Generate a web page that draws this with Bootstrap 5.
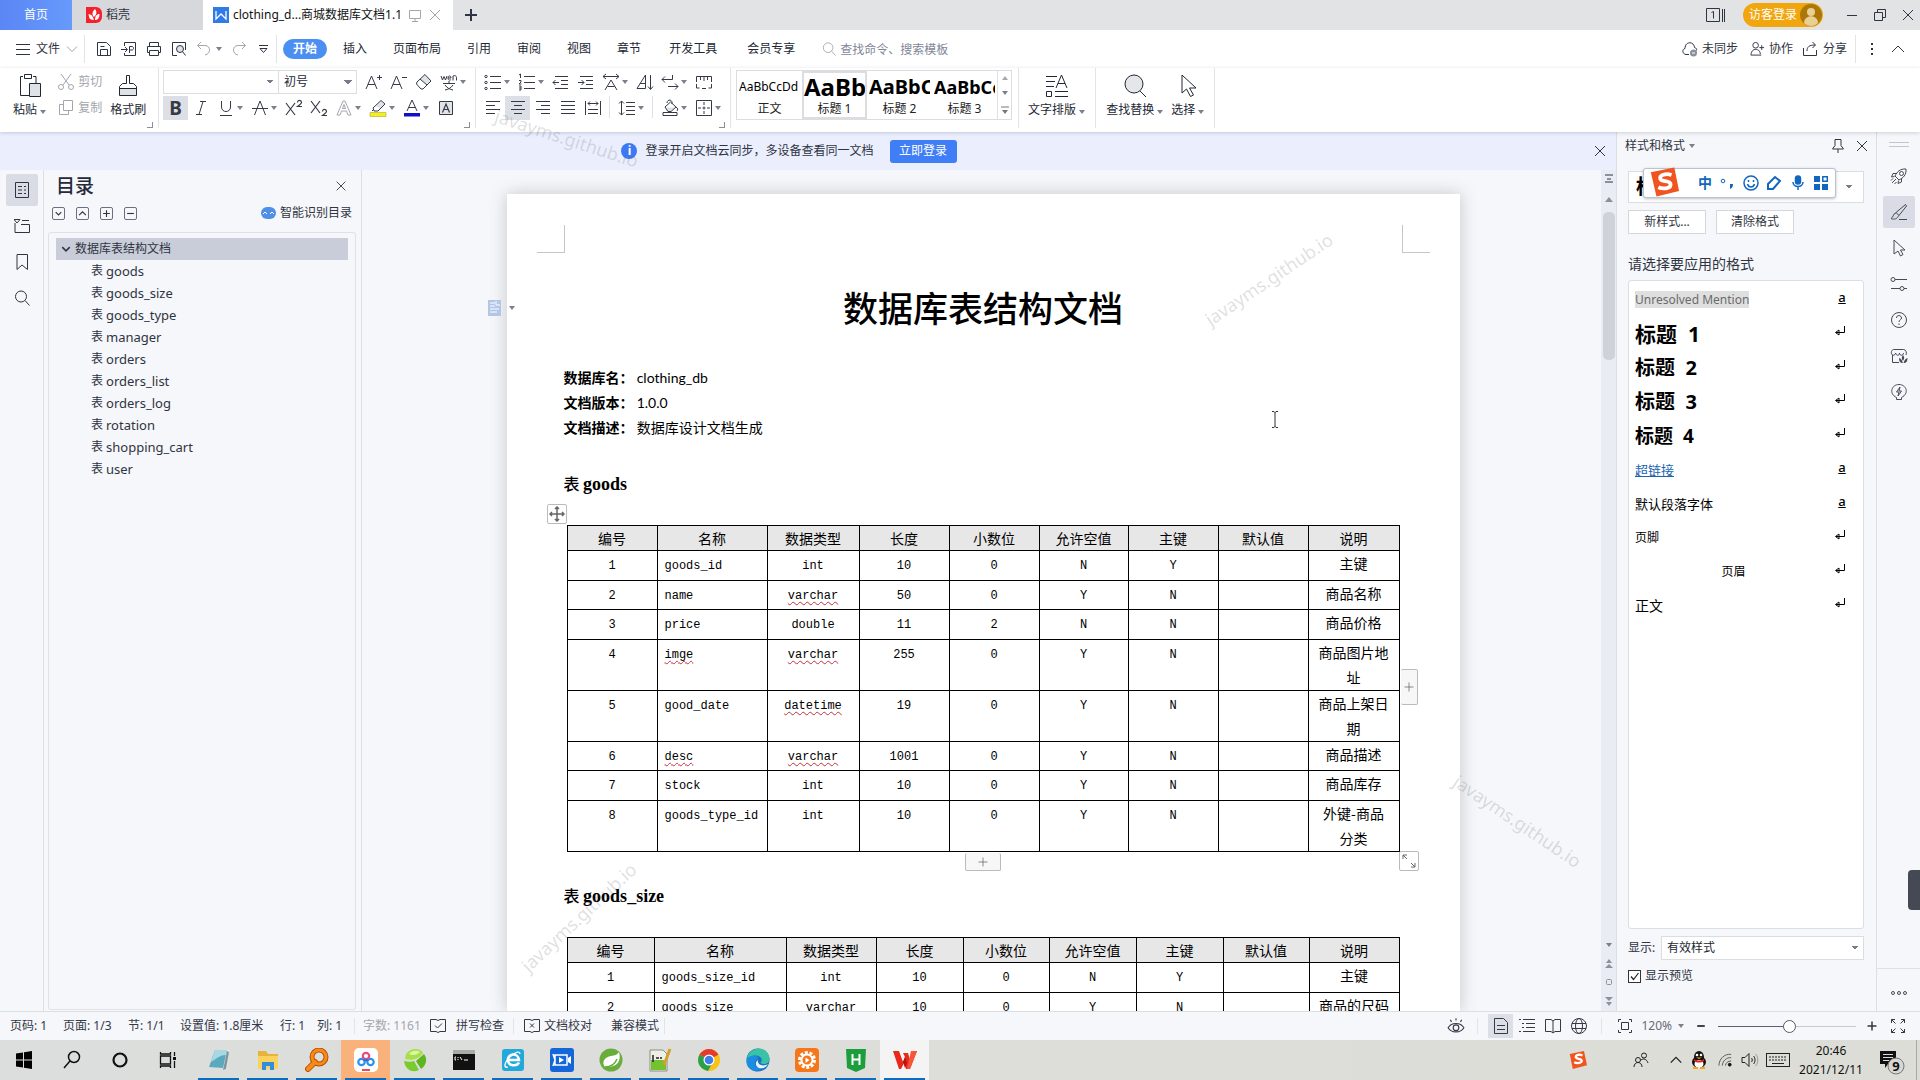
<!DOCTYPE html>
<html lang="zh-CN">
<head>
<meta charset="utf-8">
<meta name="viewport" content="width=device-width, initial-scale=1">
<title>clothing_db 商城数据库文档1.1</title>
<link href="https://cdn.jsdelivr.net/npm/bootstrap@5.3.0/dist/css/bootstrap.min.css" rel="stylesheet">
<style>
:root{--ui:"Noto Sans","Noto Sans CJK SC",sans-serif;--line:#dcdee3;--ink:#2f3442}
body{font-family:var(--ui);font-size:12px;line-height:16px;color:var(--ink);background:#f6f7fa;height:100vh;overflow:hidden}
button{font:inherit;color:inherit;background:none;border:0;padding:0;line-height:16px}
a{color:inherit;text-decoration:none}
.ico{width:16px;height:16px;flex:none;fill:none;stroke:currentColor;stroke-width:1;display:block}
.ico-l{width:24px;height:24px}
.ico-m{width:20px;height:20px}
.caret{width:0;height:0;flex:none;border:3px solid transparent;border-top:4px solid #7b808c;border-bottom:0;display:inline-block}
.vsep{width:1px;background:#e3e4e8;flex:none}
/* title bar */
.titlebar{height:30px;background:#e2e3e5}
.tab-home{width:72px;background:linear-gradient(90deg,#5b86f5,#669afb);color:#fff}
.tab-doc{width:131px;background:#d7d8db;padding-left:14px}
.tab-now{width:250px;background:#fff;padding:0 10px;color:#111}
.tab-add{margin-left:10px}
.login{height:24px;width:80px;border-radius:12px;background:#f2a60d;color:#fff;padding:0 1px 0 6px}
/* menu */
.menubar{height:38px;background:#fff}
.quick{gap:9px;margin-left:11px}
.quick .caret{margin-left:-5px}
.menubar a.mi{padding:0 13px;color:#222734}
.menubar a.mw{padding:0 15px}
.menubar a.now{background:#4a8ff2;color:#fff;border-radius:10px;padding:2px 10px;font-weight:700;margin:0 3px 0 6px}
.finder{border:0;outline:0;padding:0;width:150px;height:20px;font-size:12px;background:none}
.finder::placeholder{color:#7f8698;opacity:1}
/* ribbon */
.ribbon{height:64px;background:#fff;box-shadow:0 1px 4px rgba(60,70,100,.22);position:relative;z-index:2}
.rb{width:25px;height:24px;display:flex;align-items:center;justify-content:center;flex:none;color:#353a46}
.rs{width:34px;justify-content:flex-start;padding-left:4px;gap:2px}
.rb .ico{width:18px;height:18px}
.rb.on{background:#dcdfe5}
.rsep{width:9px;display:flex;justify-content:center}
.rsep i{width:1px;height:22px;background:#e0e1e5}
.rsel,.dsel{appearance:none;border:1px solid #dcdde1;border-radius:0;font-size:12px;line-height:16px;padding:0 5px;color:#222734;background-color:#fff;background-repeat:no-repeat;background-image:linear-gradient(45deg,transparent 50%,#777c88 50%),linear-gradient(-45deg,transparent 50%,#777c88 50%);background-size:4px 4px,4px 4px;background-position:right 8px center,right 4px center}
.rsel,.dsel{height:24px}
.rgrp{padding-top:2px}
.big{display:flex;flex-direction:column;align-items:center;gap:4px;color:#222734}
.faded{color:#a3a6ad}
.launch{position:absolute;right:5px;bottom:4px;width:6px;height:6px;border:solid #8b8e96;border-width:0 1px 1px 0}
.gallery{border:1px solid #dcdde1;height:50px;width:276px}
.gal{width:65px;display:flex;flex-direction:column;align-items:center;overflow:hidden;color:#222}
.gal b,.gal span.pv{display:block;height:30px;line-height:32px;width:61px;overflow:hidden;white-space:nowrap;color:#000;text-align:left}
.gal.on{outline:2px solid #dcdde1;outline-offset:-2px}
/* info bar */
.infobar{height:38px;background:#ebeffd}
.info-dot{width:16px;height:16px;border-radius:50%;background:#3c79f5;color:#fff;font-weight:700;text-align:center}
.btn-login{background:#3f7ef7;color:#fff;height:23px;width:67px;border-radius:3px;font-size:12px;line-height:16px}
.btn-login:hover{background:#2f6ee7;color:#fff}
/* left rail + outline */
.rail{width:44px;border-right:1px solid var(--line);padding-top:4px}
.rail button{width:32px;height:32px;margin-bottom:4px;display:flex;align-items:center;justify-content:center;border-radius:2px}
.rail .on,.tools .on{background:#d9dce5}
.outline{width:318px;border-right:1px solid var(--line);padding:4px 5px 1px 4px}
.outline h2{font-size:19px;line-height:24px;margin:0;color:#252a3a}
.sqb{width:13px;height:13px;border:1px solid #6b7080;border-radius:2px;display:flex;align-items:center;justify-content:center}
.sqb .ico{width:9px;height:9px}
.tree{border:1px solid #dfe1e6;border-radius:3px;padding:5px 7px}
.tree ul{list-style:none;margin:0;padding:0}
.tree li a{display:flex;align-items:center;height:22px;padding-left:35px;font-size:13px}
.tree li a.root{background:#c9cdd9;padding-left:4px;gap:3px;font-size:12px}
.tree a i{font-style:normal;font-size:12px;margin-right:3px}
/* document */
.canvas{padding:24px 0 0 3px;overflow:hidden;min-width:0}
.sheet{width:100%;max-width:953px;background:#fff;box-shadow:0 0 16px rgba(70,75,90,.28);position:relative;padding:0 57px;color:#000}
.crop-l,.crop-r{width:28px;height:28px;border:solid #c4c6c9;border-width:0 1px 1px 0}
.crop-r{border-width:0 0 1px 1px}
.sheet h1{font-family:"Noto Sans CJK SC",sans-serif;font-size:35px;line-height:52px;font-weight:500;margin:28px 0 0;text-align:center}
.meta{font-size:14px;line-height:25px;margin:32px 0 0;font-family:"Noto Sans CJK SC",sans-serif}
.meta p{margin:0}
.meta .lt{font-family:Lato,sans-serif}
.sheet h3{font:bold 18px/24px "Liberation Serif","Noto Sans CJK SC",serif;margin:0;padding:31px 0 29px}
.sheet h3 span{font:500 16px/24px "Noto Sans CJK SC",sans-serif}
.dt{border-collapse:collapse;table-layout:fixed;width:833px;font-family:"Noto Sans CJK SC",sans-serif;font-size:14px;line-height:25px;text-align:center;color:#000}
.dt th,.dt td{border:1px solid #000;padding:0;vertical-align:top}
.dt th{background:#e7e7e7;font-weight:400;line-height:24px}
.dt td{font-family:"Liberation Mono",monospace;font-size:12px;padding-top:3px}
.dt td:nth-child(2){text-align:left;padding-left:7px}
.dt td:last-child{font-family:"Noto Sans CJK SC",sans-serif;font-size:14px;padding:0 7px}
.dt tbody tr{height:30px}
.dt tbody tr:nth-child(even){height:29px}
.dt u{text-decoration:underline wavy #c0323c 1px;text-underline-offset:2px;text-decoration-skip-ink:none}
.tbox{position:relative;margin-left:3px;width:833px}
.hnd{position:absolute;background:#fff;border:1px solid #b9bbbf;border-radius:2px;display:flex;align-items:center;justify-content:center;color:#666}
.h-move{left:-20px;top:-21px;width:20px;height:20px}
.h-size{right:-19px;bottom:-19px;width:20px;height:20px}
.h-col{right:-18px;top:144px;width:17px;height:36px;border-left:0;background:#f7f7f8}
.h-row{left:398px;bottom:-19px;width:36px;height:18px;border-top:0;background:#f7f7f8}
.doc-tag{position:absolute;left:-19px;top:106px;display:flex;align-items:center;gap:8px}
.vscroll{width:15px;background:#eaecf4;color:#8b909c}
.thumb{width:12px;height:148px;background:#d0d2da;border-radius:5px}
/* style pane */
.pane{width:260px;border-left:1px solid var(--line);padding:6px 12px 0 11px}
.pbtn{width:78px;height:24px;border:1px solid #d5d7dd;background:#fff;color:var(--ink)}
.dsel.combo{height:32px;font-size:20px;line-height:24px;font-weight:700;color:#000;padding-left:7px;width:100%;margin:17px 0 7px;background-position:right 14px center,right 10px center}
.styles{background:#fff;border:1px solid #dcdee3;border-radius:3px;padding:2px 11px 0 6px;margin:0;list-style:none;color:#000}
.styles li{height:34px;display:flex;align-items:center}
.styles li>span:first-child{flex:1}
.styles li>:last-child{margin-bottom:6px}
.styles em{width:20px;height:16px;font-style:normal;text-align:center;flex:none;text-decoration:underline;font-size:13px;font-weight:500}
.styles .hd{font-weight:700;word-break:keep-all;white-space:pre}
.chk{width:13px;height:13px;margin:0;border:1px solid #333;border-radius:0;background-color:#fff;box-shadow:none}
.form-check-input.chk[type=checkbox]{border-radius:0}
.chk:checked{background-color:#fff;border-color:#333;--bs-form-check-bg-image:none;background-image:none}
.form-check-input.chk:checked[type=checkbox]{background-image:none}
.tick{position:absolute;left:1px;top:1px;width:11px;height:11px;pointer-events:none}
.tools{width:44px;border-left:1px solid var(--line);color:#454a57}
.tools button{width:32px;height:32px;margin-bottom:4px;display:flex;align-items:center;justify-content:center;border-radius:2px}
.tools .ico{width:18px;height:18px}
/* status bar */
.status{height:29px;border-top:1px solid var(--line);background:#f6f7fa;white-space:nowrap;color:#333846}
.status .vsep{height:16px}
.zoomer{appearance:none;width:138px;height:14px;background:linear-gradient(90deg,#5a6070 52%,#c8cad0 52%) center/100% 1px no-repeat}
.zoomer::-webkit-slider-thumb{appearance:none;width:13px;height:13px;border-radius:50%;background:#fff;border:1px solid #555a66}
/* taskbar */
.taskbar{height:40px;background:linear-gradient(90deg,#dcdedd,#dddeda 50%,#dcddd6);color:#111}
.tk{width:49px;height:40px;display:flex;align-items:center;justify-content:center;position:relative}
.sys{width:48px}
.tk svg{width:24px;height:24px}
.run::after{content:"";position:absolute;left:4px;right:4px;bottom:0;height:2px;background:#0f6cbd}
.tray svg{flex:none}
/* overlays */
.ime{position:absolute;right:84px;top:168px;width:193px;height:30px;background:#fff;border:1px solid #b8c2d4;border-radius:3px;box-shadow:0 1px 3px rgba(0,0,0,.25);z-index:5;color:#1266c0;padding:0 6px 0 54px}
.ime .logo{position:absolute;left:4px;top:-2px;width:32px;height:31px}
.wm{position:absolute;font-size:18px;line-height:24px;color:rgba(90,90,95,.2);z-index:6;pointer-events:none;white-space:nowrap}
.w1{left:492px;top:126px;transform:rotate(18deg)}
.w2{left:1194px;top:267px;transform:rotate(-34deg)}
.w3{left:504px;top:905px;transform:rotate(-43deg)}
.w4{left:1443px;top:809px;transform:rotate(34deg)}
.knob{position:absolute;right:0;top:870px;width:12px;height:40px;background:#444954;border-radius:4px 0 0 4px;z-index:5}
.ibeam{position:absolute;left:1270px;top:411px;z-index:5}
</style>
<script src="https://cdn.jsdelivr.net/npm/bootstrap@5.3.0/dist/js/bootstrap.bundle.min.js"></script>
</head>
<body class="d-flex flex-column">
<svg width="0" height="0" class="position-absolute" aria-hidden="true">
<symbol id="x" viewBox="0 0 16 16"><path d="M3 3l10 10M13 3L3 13"/></symbol>
<symbol id="down" viewBox="0 0 16 16"><path d="M3 5.500l5 5 5-5"/></symbol>
<symbol id="up" viewBox="0 0 16 16"><path d="M2 11l6-6 6 6"/></symbol>
<symbol id="plus" viewBox="0 0 16 16"><path d="M8 2v12M2 8h12"/></symbol>
<symbol id="minus" viewBox="0 0 16 16"><path d="M2 8h12"/></symbol>
<symbol id="mag" viewBox="0 0 16 16"><circle cx="7" cy="6.500" r="5.500"/><path d="M11 10.500l4.500 5"/></symbol>
<symbol id="outd" viewBox="0 0 18 18"><path d="M3 3.500h13M9 7.500h7M9 11.500h7M3 15.500h13M7 9.500H1m2.500-2.500L1 9.500 3.500 12"/></symbol>
<symbol id="ind" viewBox="0 0 18 18"><path d="M3 3.500h13M9 7.500h7M9 11.500h7M3 15.500h13M1 9.500h6M4.500 7L7 9.500 4.500 12"/></symbol>
<symbol id="ret" viewBox="0 0 16 16"><path d="M12.500 3v6.500H4M7 7v5L3.500 9.500z"/></symbol>
</svg>

<header class="titlebar d-flex flex-shrink-0">
  <button class="tab-home">首页</button>
  <button class="tab-doc d-flex align-items-center gap-1"><svg class="ico" viewBox="0 0 16 16" stroke="none"><path d="M0 0h10a6 6 0 016 6v4a6 6 0 01-6 6H0z" fill="#f5222d" stroke="none"/><path d="M8 13c-5 0-5-3-5.500-6C5 7 7 9 8 13zM8 10C5 7 7 4 9 2c2 3 2 5-1 8zm1 3c0-4 2-6 4.500-6 0 4-1.500 6-4.500 6z" fill="#fff" stroke="none"/></svg><span>稻壳</span></button>
  <div class="tab-now d-flex align-items-center">
    <svg class="ico me-1" viewBox="0 0 16 16"><path d="M0 0h16v16H0z" fill="#2f7ce8" stroke="none"/><path d="M3 4v8l5-5 5 5V4" stroke="#fff" stroke-width="1.300"/></svg>
    <span class="text-nowrap flex-fill">clothing_d...商城数据库文档1.1</span>
    <svg class="ico faded me-1" viewBox="0 0 16 16"><path d="M2.500 3.500h11v8h-11zM8 11.500V14M5 14.500h6"/></svg>
    <button aria-label="关闭标签"><svg class="ico faded"><use href="#x"/></svg></button>
  </div>
  <button class="tab-add" aria-label="新建"><svg class="ico" style="stroke-width:2"><use href="#plus"/></svg></button>
  <div class="ms-auto d-flex align-items-center">
    <svg class="ico ico-m" viewBox="0 0 20 16"><path d="M.5 1.500h13v13H.5zM16.500 2v13M18.500 2v13"/><path d="M5.500 5.500l2-1v7"/></svg>
    <i class="vsep mx-2" style="height:20px"></i>
    <button class="login d-flex align-items-center justify-content-between"><span>访客登录</span><svg width="22" height="22" viewBox="0 0 22 22"><circle cx="11" cy="11" r="11" fill="#ab7807"/><circle cx="11" cy="8" r="4" fill="#e8cf94"/><path d="M4 19c0-9 14-9 14 0-4 4-10 4-14 0z" fill="#e8cf94"/></svg></button>
    <i class="vsep mx-2" style="height:20px"></i>
    <button class="px-1 me-1" aria-label="最小化"><svg class="ico" viewBox="0 0 16 16"><path d="M3 8.500h10"/></svg></button>
    <button class="px-1 me-1" aria-label="还原"><svg class="ico" viewBox="0 0 16 16"><path d="M2.500 5.500h8v8h-8zM5.500 5V2.500h8v8H11"/></svg></button>
    <button class="px-1" aria-label="关闭"><svg class="ico"><use href="#x"/></svg></button>
  </div>
</header>

<nav class="menubar d-flex align-items-center flex-shrink-0">
  <svg class="ico ms-3" viewBox="0 0 16 16"><path d="M0 3.500h14M0 8.500h14M0 13.500h14"/></svg>
  <a href="#" class="ms-1">文件</a>
  <svg class="ico faded ms-1" viewBox="0 0 16 16"><use href="#down"/></svg>
  <i class="vsep ms-1" style="height:28px"></i>
  <div class="quick d-flex align-items-center">
    <button aria-label="保存"><svg class="ico" viewBox="0 0 16 16"><path d="M1.500 1.500h9l4 4v9h-13zM4.500 14V8.500h7V14M4.500 5.500h4"/></svg></button>
    <button aria-label="输出PDF"><svg class="ico" viewBox="0 0 16 16"><path d="M3.500 5V1.500h11v13h-11V12M0 8.500h6M4 6l2.500 2.500L4 11M8.500 12V5.500H11c2 0 2 3.500 0 3.500H8"/></svg></button>
    <button aria-label="打印"><svg class="ico" viewBox="0 0 16 16"><path d="M3.500 5V1.500h9V5M3.500 11.500h-2v-6h13v6h-2M3.500 9.500h9v5h-9z"/></svg></button>
    <button aria-label="打印预览"><svg class="ico" viewBox="0 0 16 16"><path d="M6 14.500H1.500v-13h13V9"/><circle cx="9" cy="8" r="3.500" fill="#dfe1e6"/><path d="M11.500 10.500l3 4"/></svg></button>
    <button aria-label="撤销" class="faded"><svg class="ico" viewBox="0 0 16 16"><path d="M5 1L1.500 4.500 5 8M2 4.500h7c6 0 6 8.500 0 9.500"/></svg></button>
    <i class="caret"></i>
    <button aria-label="恢复" class="faded"><svg class="ico" viewBox="0 0 16 16"><path d="M11 1l3.500 3.500L11 8M14 4.500H7c-6 0-6 8.500 0 9.500"/></svg></button>
    <button aria-label="自定义"><svg class="ico" viewBox="0 0 16 16"><path d="M3 4.500h9M4 7.500l3.500 4 3.500-4z"/></svg></button>
  </div>
  <i class="vsep ms-1" style="height:28px"></i>
  <a href="#" class="mi now">开始</a><a href="#" class="mi">插入</a><a href="#" class="mi">页面布局</a><a href="#" class="mi">引用</a><a href="#" class="mi">审阅</a><a href="#" class="mi">视图</a><a href="#" class="mi">章节</a><a href="#" class="mi mw">开发工具</a><a href="#" class="mi mw">会员专享</a>
  <label class="d-flex align-items-center ms-2 ps-1"><svg class="ico faded me-1" style="width:14px"><use href="#mag"/></svg><input class="finder" placeholder="查找命令、搜索模板" aria-label="查找命令"></label>
  <div class="ms-auto d-flex align-items-center">
    <svg class="ico me-1" viewBox="0 0 16 16"><path d="M7 13.500H4C0 13 0 8 3 7.500 3 0 12 0 12.500 6.500c2 .5 2.500 2 2 3"/><circle cx="11.500" cy="12" r="3.500" fill="#8b8fa0" stroke="none"/><path d="M10 12h3" stroke="#fff"/></svg><a href="#">未同步</a>
    <svg class="ico ms-2 me-1 ps-1" viewBox="0 0 16 16" style="width:19px"><circle cx="6" cy="4" r="3"/><path d="M1 14.500h11M1 14.500c0-8 10-8 10-1M10 6.500h5M12.500 4v5"/></svg><a href="#">协作</a>
    <svg class="ico ms-2 me-1" viewBox="0 0 16 16" style="width:18px"><path d="M1.500 7v7.500h13V9M5 10c0-4 2-6 8-6M10.500 1l3 3-3 3"/></svg><a href="#">分享</a>
    <i class="vsep mx-2" style="height:28px"></i>
    <svg class="ico" viewBox="0 0 16 16"><path d="M8 2v2M8 7v2M8 12v2" stroke-width="2"/></svg>
    <button style="margin:0 14px 0 10px" aria-label="折叠"><svg class="ico"><use href="#up"/></svg></button>
  </div>
</nav>

<section class="ribbon d-flex flex-shrink-0">
  <div class="rgrp position-relative d-flex" style="width:158px;padding-left:13px">
    <div class="big pt-1"><svg class="ico ico-l" viewBox="0 0 24 24"><path d="M5 2.500H2.500v19H12M15 2.500h3V9M6.500.5h7v4h-7zM11.500 9.500h11v13h-11z"/><path d="M12 10h10v12H12z" fill="#dfe2e7" stroke="none"/></svg><span>粘贴 <i class="caret"></i></span></div>
    <div class="faded d-flex flex-column ms-2 ps-1" style="gap:10px;padding-top:4px">
      <button class="d-flex gap-1"><svg class="ico" viewBox="0 0 16 16"><path d="M3 0l8 11M13 0L5 11"/><circle cx="3" cy="13" r="2.500"/><circle cx="13" cy="13" r="2.500"/></svg>剪切</button>
      <button class="d-flex gap-1"><svg class="ico" viewBox="0 0 16 16"><path d="M5.500.5h9v10h-9zM5 4.500H1.500v10h9V11"/></svg>复制</button>
    </div>
    <div class="big pt-1 ms-2"><svg class="ico ico-l" viewBox="0 0 24 24"><path d="M4 15h17v7H4z" fill="#dfe2e7" stroke="none"/><path d="M10.500 1.500h3v8h4l3 3v9h-17v-9l3-3h4zM4 14.500h17"/></svg><span>格式刷</span></div>
    <i class="launch"></i>
  </div>
  <i class="vsep" style="height:60px"></i>
  <div class="rgrp position-relative ps-1" style="width:316px">
    <div class="d-flex">
      <select class="rsel" style="width:116px" aria-label="字体"><option></option></select><select class="rsel me-1" style="width:79px;margin-left:-1px" aria-label="字号"><option>初号</option></select>
      <button class="rb" aria-label="增大"><svg class="ico" viewBox="0 0 18 18"><path d="M1 16L6.500 3 12 16M3 11.500h7M12 4.500h5M14.500 2v5"/></svg></button>
      <button class="rb" aria-label="减小"><svg class="ico" viewBox="0 0 18 18"><path d="M1 16L6.500 3 12 16M3 11.500h7M12 4.500h5"/></svg></button>
      <button class="rb" aria-label="清除"><svg class="ico" viewBox="0 0 18 18"><path d="M5 6.500L10 2l5.500 6L12 11.500z" fill="#dfe2e7" stroke="none"/><path d="M2 9l8-7.500L16 8l-8 8H6L1.500 11zM5 6l7 6"/></svg></button>
      <button class="rb rs" aria-label="拼音"><svg class="ico" viewBox="0 0 18 18"><path d="M1 3l1.500 4L4 3.500 5.500 7 7 3M8 5h3c0-3-3-2.500-3 0s2 2.500 3 1.500M13 7.500V3c2-1 3.500 0 3.500 1.500v3M9 8v2M3 10.500h12M5 12c2 3 5 4.500 8 5M13 12c-2 3-5 4.500-8 5"/></svg><i class="caret"></i></button>
    </div>
    <div class="d-flex" style="padding-top:2px">
      <button class="rb on" style="font:bold 19px/24px var(--ui)">B</button>
      <button class="rb" aria-label="斜体"><svg class="ico" viewBox="0 0 18 18"><path d="M8 2.500h6M4 15.500h6M11 2.500l-4 13"/></svg></button>
      <button class="rb rs" aria-label="下划线"><svg class="ico" viewBox="0 0 18 18"><path d="M4.500 2v6c0 6 9 6 9 0V2M3 16.500h12"/></svg><i class="caret"></i></button>
      <button class="rb rs" aria-label="删除线"><svg class="ico" viewBox="0 0 18 18"><path d="M3.500 16L9 2l5.500 14M1 9.500h16"/></svg><i class="caret"></i></button>
      <button class="rb" aria-label="上标"><svg class="ico" viewBox="0 0 18 18"><path d="M1 4l9 12M10 4L1 16M12.500 3.500c0-3 4-2.500 4 0 0 1-4 4-4 4H17" stroke-width="1.200"/></svg></button>
      <button class="rb" aria-label="下标"><svg class="ico" viewBox="0 0 18 18"><path d="M1 2l9 12M10 2L1 14M12.500 12.500c0-3 4-2.500 4 0 0 1-4 4-4 4H17" stroke-width="1.200"/></svg></button>
      <button class="rb rs faded" aria-label="文字效果"><svg class="ico" viewBox="0 0 18 18"><path d="M2 16L8 2h2l6 14h-3l-1.500-4h-5L5 16zM7.500 9.500h3L9 5.500z"/></svg><i class="caret"></i></button>
      <button class="rb rs" aria-label="突出显示"><svg class="ico" viewBox="0 0 18 18"><path d="M1 13.500h16v4H1z" fill="#f3f01c" stroke="#9a9a30" stroke-width=".5"/><path d="M7 7l5-5 3.500 3.500L11 10z" fill="#dfe2e7" stroke="none"/><path d="M4 9l8-7.500L16 5l-7 7H5zM3 12l2-2"/></svg><i class="caret"></i></button>
      <button class="rb rs" aria-label="字体颜色"><svg class="ico" viewBox="0 0 18 18"><path d="M1 14h16v3.500H1z" fill="#1010c8" stroke="none"/><path d="M4 12L9 1l5 11M6 8.500h6"/></svg><i class="caret"></i></button>
      <button class="rb" aria-label="字符底纹"><svg class="ico" viewBox="0 0 18 18"><path d="M2.500 2.500h13v13h-13z" fill="#e1e3e8"/><path d="M5.500 13.500L9 5l3.500 8.500M7 10.500h4" stroke-width="1.200"/></svg></button>
    </div>
    <i class="launch"></i>
  </div>
  <i class="vsep" style="height:60px"></i>
  <div class="rgrp position-relative" style="width:254px;padding-left:4px">
    <div class="d-flex">
      <button class="rb rs" aria-label="项目符号"><svg class="ico" viewBox="0 0 18 18"><path d="M6 3.500h11M6 9.500h11M6 15.500h11"/><circle cx="2" cy="3.500" r="1.200"/><circle cx="2" cy="9.500" r="1.200"/><circle cx="2" cy="15.500" r="1.200"/></svg><i class="caret"></i></button>
      <button class="rb rs" aria-label="编号"><svg class="ico" viewBox="0 0 18 18"><path d="M6 3.500h11M6 9.500h11M6 15.500h11M1 2l1.500-1v4M1 7.500h2v1.500L1 11h2.500M1 13h2v4H1m0-2h2"/></svg><i class="caret"></i></button>
      <button class="rb" aria-label="减少缩进"><svg class="ico"><use href="#outd"/></svg></button>
      <button class="rb" aria-label="增加缩进"><svg class="ico"><use href="#ind"/></svg></button>
      <button class="rb rs" aria-label="中文版式"><svg class="ico" viewBox="0 0 18 18"><path d="M3 17L9 7l6 10M5.500 13.500h7M1 3.500h16M4 1L1 3.500 4 6M14 1l3 2.500L14 6"/></svg><i class="caret"></i></button>
      <button class="rb" aria-label="排序"><svg class="ico" viewBox="0 0 18 18"><path d="M1 15.500L9.500 2v13.500zM4 10.500h5M14.500 2v14M12 13.500l2.500 3 2.500-3"/></svg></button>
      <button class="rb rs" aria-label="显示标记"><svg class="ico" viewBox="0 0 18 18"><path d="M11.500 2v4.500H1M4 3.500l-3 3 3 3M7 13.500h10M14 10.500l3 3-3 3"/></svg><i class="caret"></i></button>
      <button class="rb" aria-label="制表位"><svg class="ico" viewBox="0 0 18 18"><path d="M1.500 9V3.500h15V9M5.500 4v3M9 4v4M12.500 4v3M1.500 11v4h3M16.500 11v4h-3M7 15.500h4"/></svg></button>
    </div>
    <div class="d-flex" style="padding-top:2px">
      <button class="rb" aria-label="左对齐"><svg class="ico" viewBox="0 0 18 18"><path d="M2 2.500h14M2 6.500h9M2 10.500h14M2 14.500h9"/></svg></button>
      <button class="rb on" aria-label="居中"><svg class="ico" viewBox="0 0 18 18"><path d="M2 2.500h14M5 6.500h8M2 10.500h14M5 14.500h8"/></svg></button>
      <button class="rb" aria-label="右对齐"><svg class="ico" viewBox="0 0 18 18"><path d="M2 2.500h14M7 6.500h9M2 10.500h14M7 14.500h9"/></svg></button>
      <button class="rb" aria-label="两端对齐"><svg class="ico" viewBox="0 0 18 18"><path d="M2 2.500h14M2 6.500h14M2 10.500h14M2 14.500h14"/></svg></button>
      <button class="rb" aria-label="分散对齐"><svg class="ico" viewBox="0 0 18 18"><path d="M1.500 2v14M16.500 2v14M4 4.500h10M6 2.500l-2 2 2 2M12 2.500l2 2-2 2M4 10.500h10M4 14.500h10"/></svg></button>
      <span class="rsep"><i></i></span>
      <button class="rb rs" aria-label="行距"><svg class="ico" viewBox="0 0 18 18"><path d="M8 3.500h9M8 7.500h9M8 11.500h9M8 15.500h9M3.500 2v14M1 4.500L3.500 2 6 4.500M1 13.500L3.500 16 6 13.500"/></svg><i class="caret"></i></button>
      <span class="rsep"><i></i></span>
      <button class="rb rs" aria-label="底纹"><svg class="ico" viewBox="0 0 18 18"><path d="M5 8.500h9L10 12H7z" fill="#dfe2e7" stroke="none"/><path d="M2 13.500h14v3H2zM4 8l5.500-5 5.500 5-5 4.500H7zM6 4c0-4 6-4 5 1M15 8c2 1 2 3 1 4"/></svg><i class="caret"></i></button>
      <button class="rb rs" aria-label="边框"><svg class="ico" viewBox="0 0 18 18"><path d="M1.500 1.500h15v15h-15z"/><path d="M9 3v12M3 9h12" stroke-dasharray="3 1.500"/></svg><i class="caret"></i></button>
    </div>
    <i class="launch"></i>
  </div>
  <i class="vsep" style="height:60px"></i>
  <div class="rgrp" style="padding:2px 6px 0 5px">
    <div class="gallery d-flex">
      <button class="gal"><span class="pv">AaBbCcDd</span><span>正文</span></button>
      <button class="gal on"><b style="font-size:24px">AaBb</b><span>标题 1</span></button>
      <button class="gal"><b style="font-size:20px">AaBbC</b><span>标题 2</span></button>
      <button class="gal"><b style="font-size:18px">AaBbCc</b><span>标题 3</span></button>
      <div class="d-flex flex-column align-items-center justify-content-around border-start flex-fill">
        <svg width="6" height="4"><path d="M0 4l3-4 3 4z" fill="#a5a8b0"/></svg><i class="caret"></i><svg width="8" height="8"><path d="M0 1h8" stroke="#777"/><path d="M1 4l3 4 3-4z" fill="#777"/></svg>
      </div>
    </div>
  </div>
  <i class="vsep" style="height:60px"></i>
  <div class="rgrp d-flex" style="padding:6px 10px 0 9px"><div class="big"><svg class="ico ico-l" viewBox="0 0 24 24"><path d="M1 2.500h11M1 7.500h9M1 12.500h8M1.500 17.500h5v5h-5zM10 17.500h13M10 22.500h13M11 14l5.500-13L22 14M13 9.500h7"/></svg><span>文字排版 <i class="caret"></i></span></div></div>
  <i class="vsep" style="height:60px"></i>
  <div class="rgrp d-flex gap-2" style="padding:6px 10px 0 10px">
    <div class="big"><svg class="ico ico-l" viewBox="0 0 24 24"><circle cx="11" cy="10" r="9" fill="#e4e6ea"/><path d="M17 17l6 6"/></svg><span>查找替换 <i class="caret"></i></span></div>
    <div class="big"><svg class="ico ico-l" viewBox="0 0 24 24"><path d="M6 1v18l4.500-4 4 7.500 3-1.500-4-7H20z"/></svg><span>选择 <i class="caret"></i></span></div>
  </div>
  <i class="vsep" style="height:60px"></i>
</section>

<div class="d-flex flex-fill" style="min-height:0">
  <div class="d-flex flex-column flex-fill" style="min-width:0">
    <div class="infobar d-flex align-items-center flex-shrink-0">
      <div class="d-flex align-items-center mx-auto" style="padding-right:14px"><span class="info-dot me-2">i</span><span>登录开启文档云同步，多设备查看同一文档</span><button class="btn btn-login p-0 ms-3">立即登录</button></div>
      <button class="me-2" aria-label="关闭提示"><svg class="ico"><use href="#x"/></svg></button>
    </div>
    <div class="d-flex flex-fill" style="min-height:0">
      <nav class="rail d-flex flex-column align-items-center flex-shrink-0">
        <button class="on" aria-label="目录"><svg class="ico" viewBox="0 0 16 16"><path d="M1.500.5h13v15h-13zM4 4.500h4M10 4.500h2M4 8h4M10 8h2M4 11.500h4M10 11.500h2"/></svg></button>
        <button aria-label="章节"><svg class="ico" viewBox="0 0 16 16"><path d="M1 5v9.500h14.500v-8H7M0 1.500h6L3 5zM8 2.500h7"/></svg></button>
        <button aria-label="书签"><svg class="ico" viewBox="0 0 16 16"><path d="M3 .5h10.500v15L8 11l-5 4.500z"/></svg></button>
        <button aria-label="查找"><svg class="ico"><use href="#mag"/></svg></button>
      </nav>
      <aside class="outline d-flex flex-column flex-shrink-0">
        <div class="d-flex justify-content-between align-items-center ps-2"><h2>目录</h2><button class="me-2" aria-label="关闭目录"><svg class="ico" style="width:14px"><use href="#x"/></svg></button></div>
        <div class="d-flex align-items-center ps-1 mb-1 py-1" style="gap:11px;height:30px">
          <button class="sqb" aria-label="展开"><svg class="ico" viewBox="0 0 16 16" style="stroke-width:2"><use href="#down"/></svg></button><button class="sqb" aria-label="收起"><svg class="ico" viewBox="0 0 16 16" style="stroke-width:2"><use href="#up"/></svg></button><button class="sqb" aria-label="升级"><svg class="ico" viewBox="0 0 16 16" style="stroke-width:2"><use href="#plus"/></svg></button><button class="sqb" aria-label="降级"><svg class="ico" viewBox="0 0 16 16" style="stroke-width:2"><use href="#minus"/></svg></button>
          <a href="#" class="ms-auto d-flex align-items-center gap-1 pe-1"><svg width="15" height="12" viewBox="0 0 15 12"><rect width="15" height="12" rx="6" fill="#4f8fe6"/><path d="M2 7l2-2 2 2M9 7l2-2 2 2" fill="none" stroke="#fff"/></svg>智能识别目录</a>
        </div>
        <div class="tree flex-fill">
          <ul><li><a href="#" class="root"><svg class="ico" viewBox="0 0 16 16" style="width:12px;stroke-width:2"><use href="#down"/></svg>数据库表结构文档</a>
            <ul>
              <li><a href="#"><i>表</i>goods</a></li><li><a href="#"><i>表</i>goods_size</a></li><li><a href="#"><i>表</i>goods_type</a></li><li><a href="#"><i>表</i>manager</a></li><li><a href="#"><i>表</i>orders</a></li><li><a href="#"><i>表</i>orders_list</a></li><li><a href="#"><i>表</i>orders_log</a></li><li><a href="#"><i>表</i>rotation</a></li><li><a href="#"><i>表</i>shopping_cart</a></li><li><a href="#"><i>表</i>user</a></li>
            </ul></li></ul>
        </div>
      </aside>
      <main class="canvas flex-fill d-flex justify-content-center">
        <article class="sheet">
          <div class="doc-tag"><svg width="13" height="16" viewBox="0 0 13 16"><path d="M0 0h13v16H0z" fill="#b4c6e6"/><path d="M2 3h5M2 6h5M2 9h9M2 12h7M8 1v4h4" stroke="#fff" fill="none"/></svg><i class="caret"></i></div>
          <div class="d-flex justify-content-between" style="padding-top:31px;margin:0 -27px"><i class="crop-l"></i><i class="crop-r"></i></div>
          <h1>数据库表结构文档</h1>
          <div class="meta"><p><b>数据库名：</b> <span class="lt">clothing_db</span></p><p><b>文档版本：</b> <span class="lt">1.0.0</span></p><p><b>文档描述：</b> 数据库设计文档生成</p></div>
          <h3><span>表 </span>goods</h3>
          <div class="tbox">
            <table class="dt">
              <colgroup><col style="width:90px"><col style="width:110px"><col style="width:92px"><col style="width:90px"><col style="width:90px"><col style="width:89px"><col style="width:90px"><col style="width:90px"><col style="width:91px"></colgroup>
              <thead><tr><th>编号</th><th>名称</th><th>数据类型</th><th>长度</th><th>小数位</th><th>允许空值</th><th>主键</th><th>默认值</th><th>说明</th></tr></thead>
              <tbody>
                <tr><td>1</td><td>goods_id</td><td>int</td><td>10</td><td>0</td><td>N</td><td>Y</td><td></td><td>主键</td></tr>
                <tr><td>2</td><td>name</td><td><u>varchar</u></td><td>50</td><td>0</td><td>Y</td><td>N</td><td></td><td>商品名称</td></tr>
                <tr><td>3</td><td>price</td><td>double</td><td>11</td><td>2</td><td>N</td><td>N</td><td></td><td>商品价格</td></tr>
                <tr><td>4</td><td><u>imge</u></td><td><u>varchar</u></td><td>255</td><td>0</td><td>Y</td><td>N</td><td></td><td>商品图片地址</td></tr>
                <tr><td>5</td><td>good_date</td><td><u>datetime</u></td><td>19</td><td>0</td><td>Y</td><td>N</td><td></td><td>商品上架日期</td></tr>
                <tr><td>6</td><td><u>desc</u></td><td><u>varchar</u></td><td>1001</td><td>0</td><td>Y</td><td>N</td><td></td><td>商品描述</td></tr>
                <tr><td>7</td><td>stock</td><td>int</td><td>10</td><td>0</td><td>Y</td><td>N</td><td></td><td>商品库存</td></tr>
                <tr><td>8</td><td>goods_type_id</td><td>int</td><td>10</td><td>0</td><td>Y</td><td>N</td><td></td><td>外键-商品<br>分类</td></tr>
              </tbody>
            </table>
            <span class="hnd h-move"><svg class="ico" viewBox="0 0 16 16" style="stroke-width:1.500"><path d="M8 1v14M1 8h14M6 3l2-2 2 2M6 13l2 2 2-2M3 6L1 8l2 2M13 6l2 2-2 2"/></svg></span>
            <span class="hnd h-size"><svg class="ico" viewBox="0 0 16 16"><path d="M2 6V2h4M2 2l4 4M14 10v4h-4M14 14l-4-4"/></svg></span>
            <button class="hnd h-col" aria-label="添加列"><svg class="ico" style="width:12px;height:12px" viewBox="0 0 16 16"><use href="#plus"/></svg></button>
            <button class="hnd h-row" aria-label="添加行"><svg class="ico" style="width:12px;height:12px" viewBox="0 0 16 16"><use href="#plus"/></svg></button>
          </div>
          <h3><span>表 </span>goods_size</h3>
          <div class="tbox">
            <table class="dt">
              <colgroup><col style="width:87px"><col style="width:132px"><col style="width:90px"><col style="width:87px"><col style="width:86px"><col style="width:87px"><col style="width:87px"><col style="width:86px"><col style="width:90px"></colgroup>
              <thead><tr><th>编号</th><th>名称</th><th>数据类型</th><th>长度</th><th>小数位</th><th>允许空值</th><th>主键</th><th>默认值</th><th>说明</th></tr></thead>
              <tbody>
                <tr><td>1</td><td>goods_size_id</td><td>int</td><td>10</td><td>0</td><td>N</td><td>Y</td><td></td><td>主键</td></tr>
                <tr><td>2</td><td>goods_size</td><td>varchar</td><td>10</td><td>0</td><td>Y</td><td>N</td><td></td><td>商品的尺码</td></tr>
              </tbody>
            </table>
          </div>
        </article>
      </main>
      <div class="vscroll d-flex flex-column align-items-center flex-shrink-0">
        <svg width="10" height="9" class="mt-1"><path d="M1 1h8M1 8h8M3 5h4" stroke="currentColor" stroke-width="2"/></svg>
        <svg width="8" height="5" style="margin:14px 0 10px"><path d="M0 5l4-5 4 5z" fill="currentColor"/></svg>
        <i class="thumb"></i>
        <i class="caret mt-auto mb-2"></i>
        <svg width="8" height="56" viewBox="0 0 8 56"><path d="M1 8l3-4 3 4zM0 13l4-4 4 4zM0 42h8l-4 4zM1 47h6l-3 4z" fill="currentColor"/><rect x="1.500" y="24.500" width="5" height="5" rx="1" fill="none" stroke="currentColor"/></svg>
      </div>
    </div>
  </div>

  <aside class="pane d-flex flex-column flex-shrink-0">
    <div class="d-flex align-items-center" style="margin-left:-3px;height:16px"><span>样式和格式</span><i class="caret ms-1"></i><svg class="ico ms-auto me-2" viewBox="0 0 16 16"><path d="M5 1.500h6v6l2.500 3.500h-11L5 7.500zM8 11v4"/></svg><button aria-label="关闭窗格" style="margin-right:-6px"><svg class="ico"><use href="#x"/></svg></button></div>
    <select class="dsel combo" aria-label="当前样式"><option>标题 1</option></select>
    <div class="d-flex" style="gap:10px"><button class="pbtn">新样式...</button><button class="pbtn">清除格式</button></div>
    <div style="font-size:14px;line-height:20px;margin:20px 0 6px">请选择要应用的格式</div>
    <ul class="styles flex-fill">
      <li><span><span style="background:#dfdfdf;color:#6b6b6b">Unresolved Mention</span></span><em>a</em></li>
      <li><span class="hd" style="font-size:21px">标题  1</span><svg class="ico me-1"><use href="#ret"/></svg></li>
      <li><span class="hd" style="font-size:20px">标题  2</span><svg class="ico me-1"><use href="#ret"/></svg></li>
      <li><span class="hd" style="font-size:20px">标题  3</span><svg class="ico me-1"><use href="#ret"/></svg></li>
      <li><span class="hd" style="font-size:19px">标题  4</span><svg class="ico me-1"><use href="#ret"/></svg></li>
      <li><span><a href="#" style="color:#1a63b0;text-decoration:underline;font-size:13px">超链接</a></span><em>a</em></li>
      <li><span style="font-size:13px">默认段落字体</span><em>a</em></li>
      <li><span>页脚</span><svg class="ico me-1"><use href="#ret"/></svg></li>
      <li><span class="text-center">页眉</span><svg class="ico me-1"><use href="#ret"/></svg></li>
      <li><span style="font-size:14px">正文</span><svg class="ico me-1"><use href="#ret"/></svg></li>
    </ul>
    <div class="d-flex align-items-center" style="margin-top:7px"><label for="show" class="me-1" style="width:29px">显示:</label><select id="show" class="dsel flex-fill"><option>有效样式</option></select></div>
    <div class="d-flex align-items-center" style="margin:8px 0 27px"><span class="position-relative d-flex"><input type="checkbox" checked id="pv" class="form-check-input chk"><svg class="tick" viewBox="0 0 11 11"><path d="M2 5.500l2.500 3L9.500 2" fill="none" stroke="#222" stroke-width="1.200"/></svg></span><label for="pv" class="ms-1">显示预览</label></div>
  </aside>
  <nav class="tools d-flex flex-column align-items-center flex-shrink-0">
    <svg width="20" height="6" class="flex-shrink-0" style="margin:10px 0 12px"><path d="M0 .5h20M0 4.500h20" stroke="#c3c6cd"/></svg>
    <button aria-label="火箭"><svg class="ico" viewBox="0 0 18 18"><path d="M16 2c-6-.5-9 3-11 7l4 4c4-2 7.500-5 7-11zM7 6.500H3L1.500 10l3-.5M11.500 11v4L8 16.500l.5-3M2 16l4-4M1 13.500l2-2M4.500 17l2-2"/><circle cx="11.500" cy="6.500" r="2"/></svg></button>
    <button class="on" aria-label="样式"><svg class="ico" viewBox="0 0 18 18"><path d="M15.500 1.500L6 9.500l3 3L16.500 3zM6 10c-3 0-2 4-5 5.500 3 1.500 7 0 7.500-3M9 16.500h8"/></svg></button>
    <button aria-label="选择"><svg class="ico" viewBox="0 0 18 18"><path d="M4 1v14l4-3 2.500 5 2.500-1.500L10.500 11H15z"/></svg></button>
    <button aria-label="设置"><svg class="ico" viewBox="0 0 18 18"><circle cx="3" cy="4.500" r="2"/><path d="M5 4.500h12M1 13.500h9M14 13.500h3"/><circle cx="12" cy="13.500" r="2"/></svg></button>
    <button aria-label="帮助"><svg class="ico" viewBox="0 0 18 18"><circle cx="9" cy="9" r="7.500"/><path d="M6.500 7c0-3.500 5-3 5 0 0 2-2.500 1.500-2.500 4M9 12.500v1.500"/></svg></button>
    <button aria-label="资源"><svg class="ico" viewBox="0 0 18 18"><path d="M9 15.500H2.500V8C0 6 2 2.500 3.500 2.500h10C16 2.500 17 6 16 8M2.500 8c2 1 3-1 3-2 1 3 4 3 4 0 0 3 4 3 4 0"/><path d="M9 11c3 1 3 3 4 5-3 0-4-2-4-5zm8.500 0c-3 1-3 3-4 5 3 0 4-2 4-5zM13 8c2 3 1 4 0 6-1-2-2-3 0-6z" fill="currentColor" stroke="none"/></svg></button>
    <button aria-label="推荐"><svg class="ico" viewBox="0 0 18 18"><path d="M6.500 14.500v2h5v-2c8-4 5-13-2.500-13s-10.500 9-2.500 13zM10 4L6.500 9H9l-1 4 3.500-5H9z"/></svg></button>
    <div class="mt-auto w-100 border-top text-center" style="height:43px;padding-top:15px"><svg width="18" height="6" viewBox="0 0 18 6" fill="none" stroke="#454a57"><circle cx="3" cy="3" r="1.500"/><circle cx="9" cy="3" r="1.500"/><circle cx="15" cy="3" r="1.500"/></svg></div>
  </nav>
</div>

<footer class="status d-flex align-items-center flex-shrink-0" style="padding-left:10px">
  <span style="width:53px">页码: 1</span><span style="width:65px">页面: 1/3</span><span style="width:52px">节: 1/1</span><span style="width:100px">设置值: 1.8厘米</span><span style="width:37px">行: 1</span><span style="width:37px">列: 1</span><i class="vsep me-2"></i>
  <span class="faded" style="width:67px">字数: 1161</span>
  <svg class="ico" viewBox="0 0 16 16" style="margin-right:10px"><path d="M.5 1.500H6l2 1 2-1h5.500v12H10l-2 1-2-1H.5zM5 7.500l2.500 2.500L12 5.500"/></svg><button>拼写检查</button><i class="vsep" style="margin:0 10px 0 9px"></i>
  <svg class="ico me-1" viewBox="0 0 16 16"><path d="M.5 1.500H6l2 1 2-1h5.500v12H10l-2 1-2-1H.5zM6 5.500l4 4M10 5.500l-4 4"/></svg><button>文档校对</button><button style="margin:0 5px 0 19px">兼容模式</button><i class="vsep"></i>
  <div class="ms-auto d-flex align-items-center">
    <svg class="ico" viewBox="0 0 16 16" style="width:18px;height:18px"><path d="M1 9.500c3-5 11-5 14 0-3 5-11 5-14 0zM8 1v2M3 2.500l1 2M13 2.500l-1 2"/><circle cx="8" cy="9.500" r="2.500"/></svg>
    <i class="vsep" style="margin:0 10px 0 12px"></i>
    <div class="d-flex" style="gap:1px">
    <button class="rb on" aria-label="页面视图"><svg class="ico" viewBox="0 0 18 18"><path d="M2.500 1.500h9l4 4v11h-13zM5 8.500h8M5 12.500h8"/></svg></button>
    <button class="rb" aria-label="大纲视图"><svg class="ico" viewBox="0 0 18 18"><path d="M5 2.500h12M8 6.500h9M8 10.500h9M5 14.500h12M1 2.500h2M4 6.500h2M4 10.500h2M1 14.500h2"/></svg></button>
    <button class="rb" aria-label="阅读视图"><svg class="ico" viewBox="0 0 18 18"><path d="M1.500 2.500H7l2 1.500 2-1.500h5.500v12H11L9 16l-2-1.500H1.500zM9 4v12"/></svg></button>
    <button class="rb" aria-label="网页视图"><svg class="ico" viewBox="0 0 18 18"><circle cx="9" cy="9" r="7.500"/><ellipse cx="9" cy="9" rx="3.500" ry="7.500"/><path d="M2 6.500h14M2 11.500h14"/></svg></button>
    </div>
    <i class="vsep" style="margin:0 15px 0 10px"></i>
    <svg class="ico" viewBox="0 0 16 16"><path d="M1.500 4V1.500H4M12 1.500h2.500V4M14.500 12v2.500H12M4 14.500H1.500V12M4.500 4.500h7v7h-7z"/></svg>
    <span style="margin:0 6px 0 8px;color:#666b78">120%</span><i class="caret"></i>
    <button class="ms-2 ps-1" aria-label="缩小"><svg class="ico" style="width:10px;stroke-width:3" viewBox="0 0 16 16"><use href="#minus"/></svg></button>
    <input type="range" class="zoomer" min="0" max="100" value="52" aria-label="缩放" style="margin:0 10px 0 12px">
    <button aria-label="放大"><svg class="ico" style="width:12px;stroke-width:2" viewBox="0 0 16 16"><use href="#plus"/></svg></button>
    <svg class="ico" viewBox="0 0 16 16" style="margin:0 14px 0 12px"><path d="M1.500 5V1.500H5M1.500 1.500l4 4M11 1.500h3.500V5M14.500 1.500l-4 4M14.500 11v3.500H11M14.500 14.500l-4-4M5 14.500H1.500V11M1.500 14.500l4-4"/></svg>
  </div>
</footer>

<footer class="taskbar d-flex flex-shrink-0">
  <button class="tk sys" aria-label="开始"><svg viewBox="0 0 24 24"><path d="M4 5.500l7-1v7H4zm8-1.200L20 3v8.500h-8zM4 12.500h7v7l-7-1zm8 0h8V21l-8-1.300z"/></svg></button>
  <button class="tk sys" aria-label="搜索"><svg viewBox="0 0 24 24" fill="none" stroke="#111" stroke-width="1.500"><circle cx="14" cy="9" r="5.500"/><path d="M10 13l-6 7"/></svg></button>
  <button class="tk sys" aria-label="Cortana"><svg viewBox="0 0 24 24" fill="none" stroke="#111" stroke-width="2.200"><circle cx="12" cy="12" r="6.500"/></svg></button>
  <button class="tk sys" aria-label="任务视图"><svg viewBox="0 0 24 24" fill="none" stroke="#111" stroke-width="1.300"><path d="M4.500 8h10v8h-10zM4.500 4v2h10V4M4.500 20v-2h10v2M18.500 4v4M18.500 13v7"/><path d="M17 9h3v3h-3z" fill="#111" stroke="none"/></svg></button>
  <button class="tk run" aria-label="记事本" style="margin-left:2px"><svg viewBox="0 0 24 24"><path d="M9 2h13l-2 19-3 1z" fill="#e9eef0"/><path d="M8 2h12l-4 18-14-1z" fill="#5ba9bd"/><path d="M8 2h12l-1 5C12 7 8 12 4 14z" fill="#a8d8e2"/><path d="M20 3l2 1-3 17-3 1z" fill="#7f979c"/></svg></button>
  <button class="tk run" aria-label="资源管理器"><svg viewBox="0 0 24 24"><path d="M2 3h8l2 3h10v15H2z" fill="#e8b339"/><path d="M2 8h20v13H2z" fill="#fbd35c"/><path d="M6 22v-8h12v8h-4v-4h-4v4z" fill="#2f8fdc"/></svg></button>
  <button class="tk run" aria-label="搜索工具"><svg viewBox="0 0 24 24" fill="none"><path d="M3 21l7-7" stroke="#b3510b" stroke-width="6" stroke-linecap="round"/><circle cx="14" cy="9" r="7" stroke="#b3510b" stroke-width="5"/><path d="M3 21l7-7" stroke="#f98a14" stroke-width="4" stroke-linecap="round"/><circle cx="14" cy="9" r="7" stroke="#f98a14" stroke-width="3"/></svg></button>
  <button class="tk run" aria-label="网盘" style="background:#f9b27b"><svg viewBox="0 0 24 24"><rect width="24" height="24" rx="5" fill="#fff"/><g fill="none" stroke-width="2.200"><circle cx="7.500" cy="14" r="3.200" stroke="#2a95e8"/><circle cx="16.500" cy="14" r="3.200" stroke="#2a95e8"/><circle cx="12" cy="8" r="3.200" stroke="#ec4a7b"/><path d="M9.500 11.500c1.500 1 3 1.500 4.500 0" stroke="#2d6fe0"/></g><path d="M8 21h8v2H8z" fill="#ec4a5b"/></svg></button>
  <button class="tk run" aria-label="绿色工具"><svg viewBox="0 0 24 24"><path d="M3 6C7 0 17-1 20 5c-4 6-10 8-18 6z" fill="#a7e04b"/><path d="M21 6c4 5 2 12-3 15l-5-8z" fill="#5fb51d"/><path d="M1 13c4 1 8 1 10 0l5 9C8 26 2 20 1 13z" fill="#79cb2e"/><path d="M6 6c3-4 8-4 11-2-3 3-7 4-11 2z" fill="#dcf7a4"/></svg></button>
  <button class="tk run" aria-label="命令行"><svg viewBox="0 0 24 24"><path d="M1 2h22v20H1z" fill="#111"/><path d="M1 2h22v4H1z" fill="#aaa"/><path d="M4 9H3v3h1M6 9v1M6 11v1M8 9l2 3M12 12h4" stroke="#fff" fill="none"/></svg></button>
  <button class="tk run" aria-label="IE"><svg viewBox="0 0 24 24"><rect x="1" y="1" width="22" height="22" rx="3" fill="#23a8dc"/><path d="M18 14.500c-2 4-10 4-11-1.500C6 5 17 4 18 12H7" fill="none" stroke="#fff" stroke-width="2.500"/><path d="M19 6c0-5-10 1-14 8-2 4-1 6 2 5" fill="none" stroke="#fff" stroke-width="1.300"/></svg></button>
  <button class="tk run" aria-label="录屏"><svg viewBox="0 0 24 24"><rect width="24" height="24" rx="3" fill="#1467d8"/><path d="M5 7h12v10H5zM3 6l2 6-2 6" fill="none" stroke="#fff" stroke-width="1.500"/><path d="M9 9l5 3-5 3zM18 10l3-2v8l-3-2z" fill="#fff"/></svg></button>
  <button class="tk run" aria-label="Spring"><svg viewBox="0 0 24 24"><circle cx="12" cy="12" r="11.500" fill="#69ad3c"/><path d="M20 4c3 10-3 16-14 15-4-5 0-10 6-11 4-.5 6-1 8-4z" fill="#fff"/><path d="M6 19c6 0 10-3 12-8" fill="none" stroke="#69ad3c" stroke-width="1.500"/></svg></button>
  <button class="tk run" aria-label="Notepad++"><svg viewBox="0 0 24 24"><path d="M2 2h13l4 4v17H2z" fill="#eef0e8" stroke="#8a8d80"/><path d="M3 12h15v10H3z" fill="#72c232"/><path d="M5 7v7M8 10h3M12 10h2" stroke="#222" stroke-width="1.500"/><path d="M22 1l-6 16" stroke="#d7a02a" stroke-width="3"/></svg></button>
  <button class="tk run" aria-label="Chrome"><svg viewBox="0 0 24 24"><circle cx="12" cy="12" r="11" fill="#fbc116"/><path d="M12 12L2.500 6.500C7-1 17-1 21.500 6.500z" fill="#e33b2e"/><path d="M12 12L2.500 6.500C-1 13 2 21 11 23l5-9z" fill="#27a14b"/><circle cx="12" cy="12" r="5.500" fill="#fff"/><circle cx="12" cy="12" r="4.300" fill="#3f7fe8"/></svg></button>
  <button class="tk run" aria-label="Edge"><svg viewBox="0 0 24 24"><circle cx="12" cy="12" r="11.500" fill="#1871c4"/><path d="M1 11C3-3 23-3 23.500 11c0 5-6 6-9 4 5-6-6-11-13.500-4z" fill="#38c3a4"/><path d="M1 11c5-6 12-3 11 0-5 2-4 10 4 9-7 7-18 0-15-9z" fill="#1b8de0"/><path d="M12 12c-1 5 5 7 10 4-2 4-6 5-9 4-4-2-4-6-1-8z" fill="#e9f1f5"/></svg></button>
  <button class="tk run" aria-label="设置工具"><svg viewBox="0 0 24 24"><rect width="24" height="24" rx="4" fill="#f6761a"/><circle cx="12" cy="12" r="7.500" fill="none" stroke="#fff" stroke-width="3" stroke-dasharray="3 1.700"/><circle cx="12" cy="12" r="5.500" fill="none" stroke="#fff" stroke-width="2"/><path d="M10.500 9.500l4 2.500-4 3z" fill="#fff"/></svg></button>
  <button class="tk run" aria-label="HBuilder"><svg viewBox="0 0 24 24"><path d="M2 1h20l-1 19-9 4-9-4z" fill="#1c9e3c"/><path d="M8.500 6v11M15.500 6v11M8.500 11.500h7" stroke="#fff" stroke-width="2"/></svg></button>
  <button class="tk run" aria-label="WPS" style="background:#f3f4f3"><svg viewBox="0 0 24 24"><path d="M0 3h6l4 11 2-5-2-4h5l2 7 2-5-1-4h6l-7 18h-4l-2-6-3 6H6z" fill="#e8291c"/><path d="M18 3h6l-7 18h-3z" fill="#f8543a"/><path d="M10 14l2-5 2 6-2 5z" fill="#b81410"/></svg></button>
  <div class="tray ms-auto d-flex align-items-center">
    <svg width="18" height="18" viewBox="0 0 24 24" style="margin-right:46px"><path d="M1 4l19-4 4 19-19 5z" fill="#f0551f"/><path d="M18 6c-4-2-9-1-9 2s8 2 8 5-6 4-10 2" fill="none" stroke="#fff" stroke-width="3"/></svg>
    <svg width="16" height="16" viewBox="0 0 16 16" fill="none" stroke="#222" style="margin-right:20px"><circle cx="5" cy="8" r="2.500"/><path d="M1 15c0-6 8-6 8 0"/><circle cx="11" cy="3.500" r="2.500"/><path d="M8 8c2-2 6-1 7 3"/></svg>
    <svg width="14" height="14" viewBox="0 0 16 16" fill="none" stroke="#222" stroke-width="1.500" style="margin-right:8px"><path d="M2 11l6-6 6 6"/></svg>
    <svg width="16" height="18" viewBox="0 0 16 18" style="margin-right:11px"><ellipse cx="8" cy="11" rx="7" ry="6" fill="#111"/><ellipse cx="8" cy="6" rx="5" ry="6" fill="#111"/><ellipse cx="8" cy="13" rx="4.500" ry="4" fill="#fff"/><path d="M3 8c3 2 7 2 10 0v2c-3 2-7 2-10 0z" fill="#e32222"/><circle cx="6" cy="4" r="1.300" fill="#fff"/><circle cx="10" cy="4" r="1.300" fill="#fff"/><path d="M5 6.500h6l-3 1.500zM2 16h5v2H2zM9 16h5v2H9z" fill="#f6a913"/></svg>
    <svg width="15" height="16" viewBox="0 0 16 16" fill="none" stroke="#555" style="margin-right:8px"><path d="M1 14C1 7 7 1 14 2M4.500 14C5 9 9 5 14 5.500M8 14c0-3 3-5 6-5"/><circle cx="12.500" cy="13" r="1.500" fill="#111" stroke="#111"/></svg>
    <svg width="18" height="16" viewBox="0 0 18 16" fill="none" stroke="#222" style="margin-right:7px"><path d="M1 5.500h3l4-4v13l-4-4H1zM10.500 6c1 1 1 3 0 4M12.500 4c2 2 2 6 0 8"/><path d="M14.500 2c3 3 3 9 0 12" stroke="#999"/></svg>
    <svg width="24" height="14" viewBox="0 0 24 14" fill="none" stroke="#222" style="margin-right:8px"><rect x=".5" y=".5" width="23" height="13"/><path d="M3 4h18M3 7h18" stroke-dasharray="2 1"/><path d="M6 10.500h12"/></svg>
    <div class="text-center" style="width:66px;line-height:19px">20:46<br>2021/12/11</div>
    <svg width="26" height="28" viewBox="0 0 26 28" style="margin:4px 11px 0 15px"><path d="M1 3h16v13H9l-3 4v-4H1z" fill="#111"/><path d="M4 6.500h10M4 9.500h10M4 12.500h6" stroke="#ddd"/><circle cx="17" cy="18" r="8" fill="#d7d8d4" stroke="#777"/><text x="17" y="23" font-size="13" font-weight="700" text-anchor="middle" fill="#111">9</text></svg>
    <i class="vsep" style="height:40px;background:#a9aaa7;margin-right:3px"></i>
  </div>
</footer>

<div class="ime d-flex align-items-center justify-content-between">
  <svg class="logo" viewBox="0 0 34 32"><path d="M3 5l25-5 5 25-24 6z" fill="#f0551f"/><path d="M25 8c-6-2-13 0-12 4s11 1 11 6-9 5-13 3" fill="none" stroke="#fff" stroke-width="4"/></svg>
  <b style="font-size:14px">中</b>
  <svg class="ico" viewBox="0 0 16 16"><circle cx="4" cy="6" r="1.800"/><path d="M11 9h3c0 3-1 4-3 5z" fill="currentColor" stroke="none"/></svg>
  <svg class="ico" viewBox="0 0 16 16" style="stroke-width:1.500"><circle cx="8" cy="8" r="7"/><path d="M4.500 9c1 4 6 4 7 0M5.500 5v2M10.500 5v2"/></svg>
  <svg class="ico" viewBox="0 0 16 16" style="stroke-width:2"><path d="M2 9l7-7 5 4-7 8H2z"/></svg>
  <svg class="ico" viewBox="0 0 16 16" style="stroke-width:1.500"><rect x="5.500" y="1" width="5" height="8" rx="2.500" fill="currentColor"/><path d="M3 7c0 6 10 6 10 0M8 12v3"/></svg>
  <svg class="ico" viewBox="0 0 16 16"><path d="M1 1h6v6H1zM1 9h6v6H1zM9 9h6v6H9z" fill="currentColor" stroke="none"/><path d="M9.800 1.800h4.500v4.500H9.800z" stroke-width="1.500"/></svg>
</div>
<svg class="ibeam" width="10" height="17" viewBox="0 0 10 17"><path d="M2 .5h2l1 1 1-1h2M5 1v15M2 16.500h2l1-1 1 1h2" fill="none" stroke="#333"/></svg>
<i class="knob"></i>
<span class="wm w1">javayms.github.io</span><span class="wm w2">javayms.github.io</span><span class="wm w3">javayms.github.io</span><span class="wm w4">javayms.github.io</span>
</body>
</html>
